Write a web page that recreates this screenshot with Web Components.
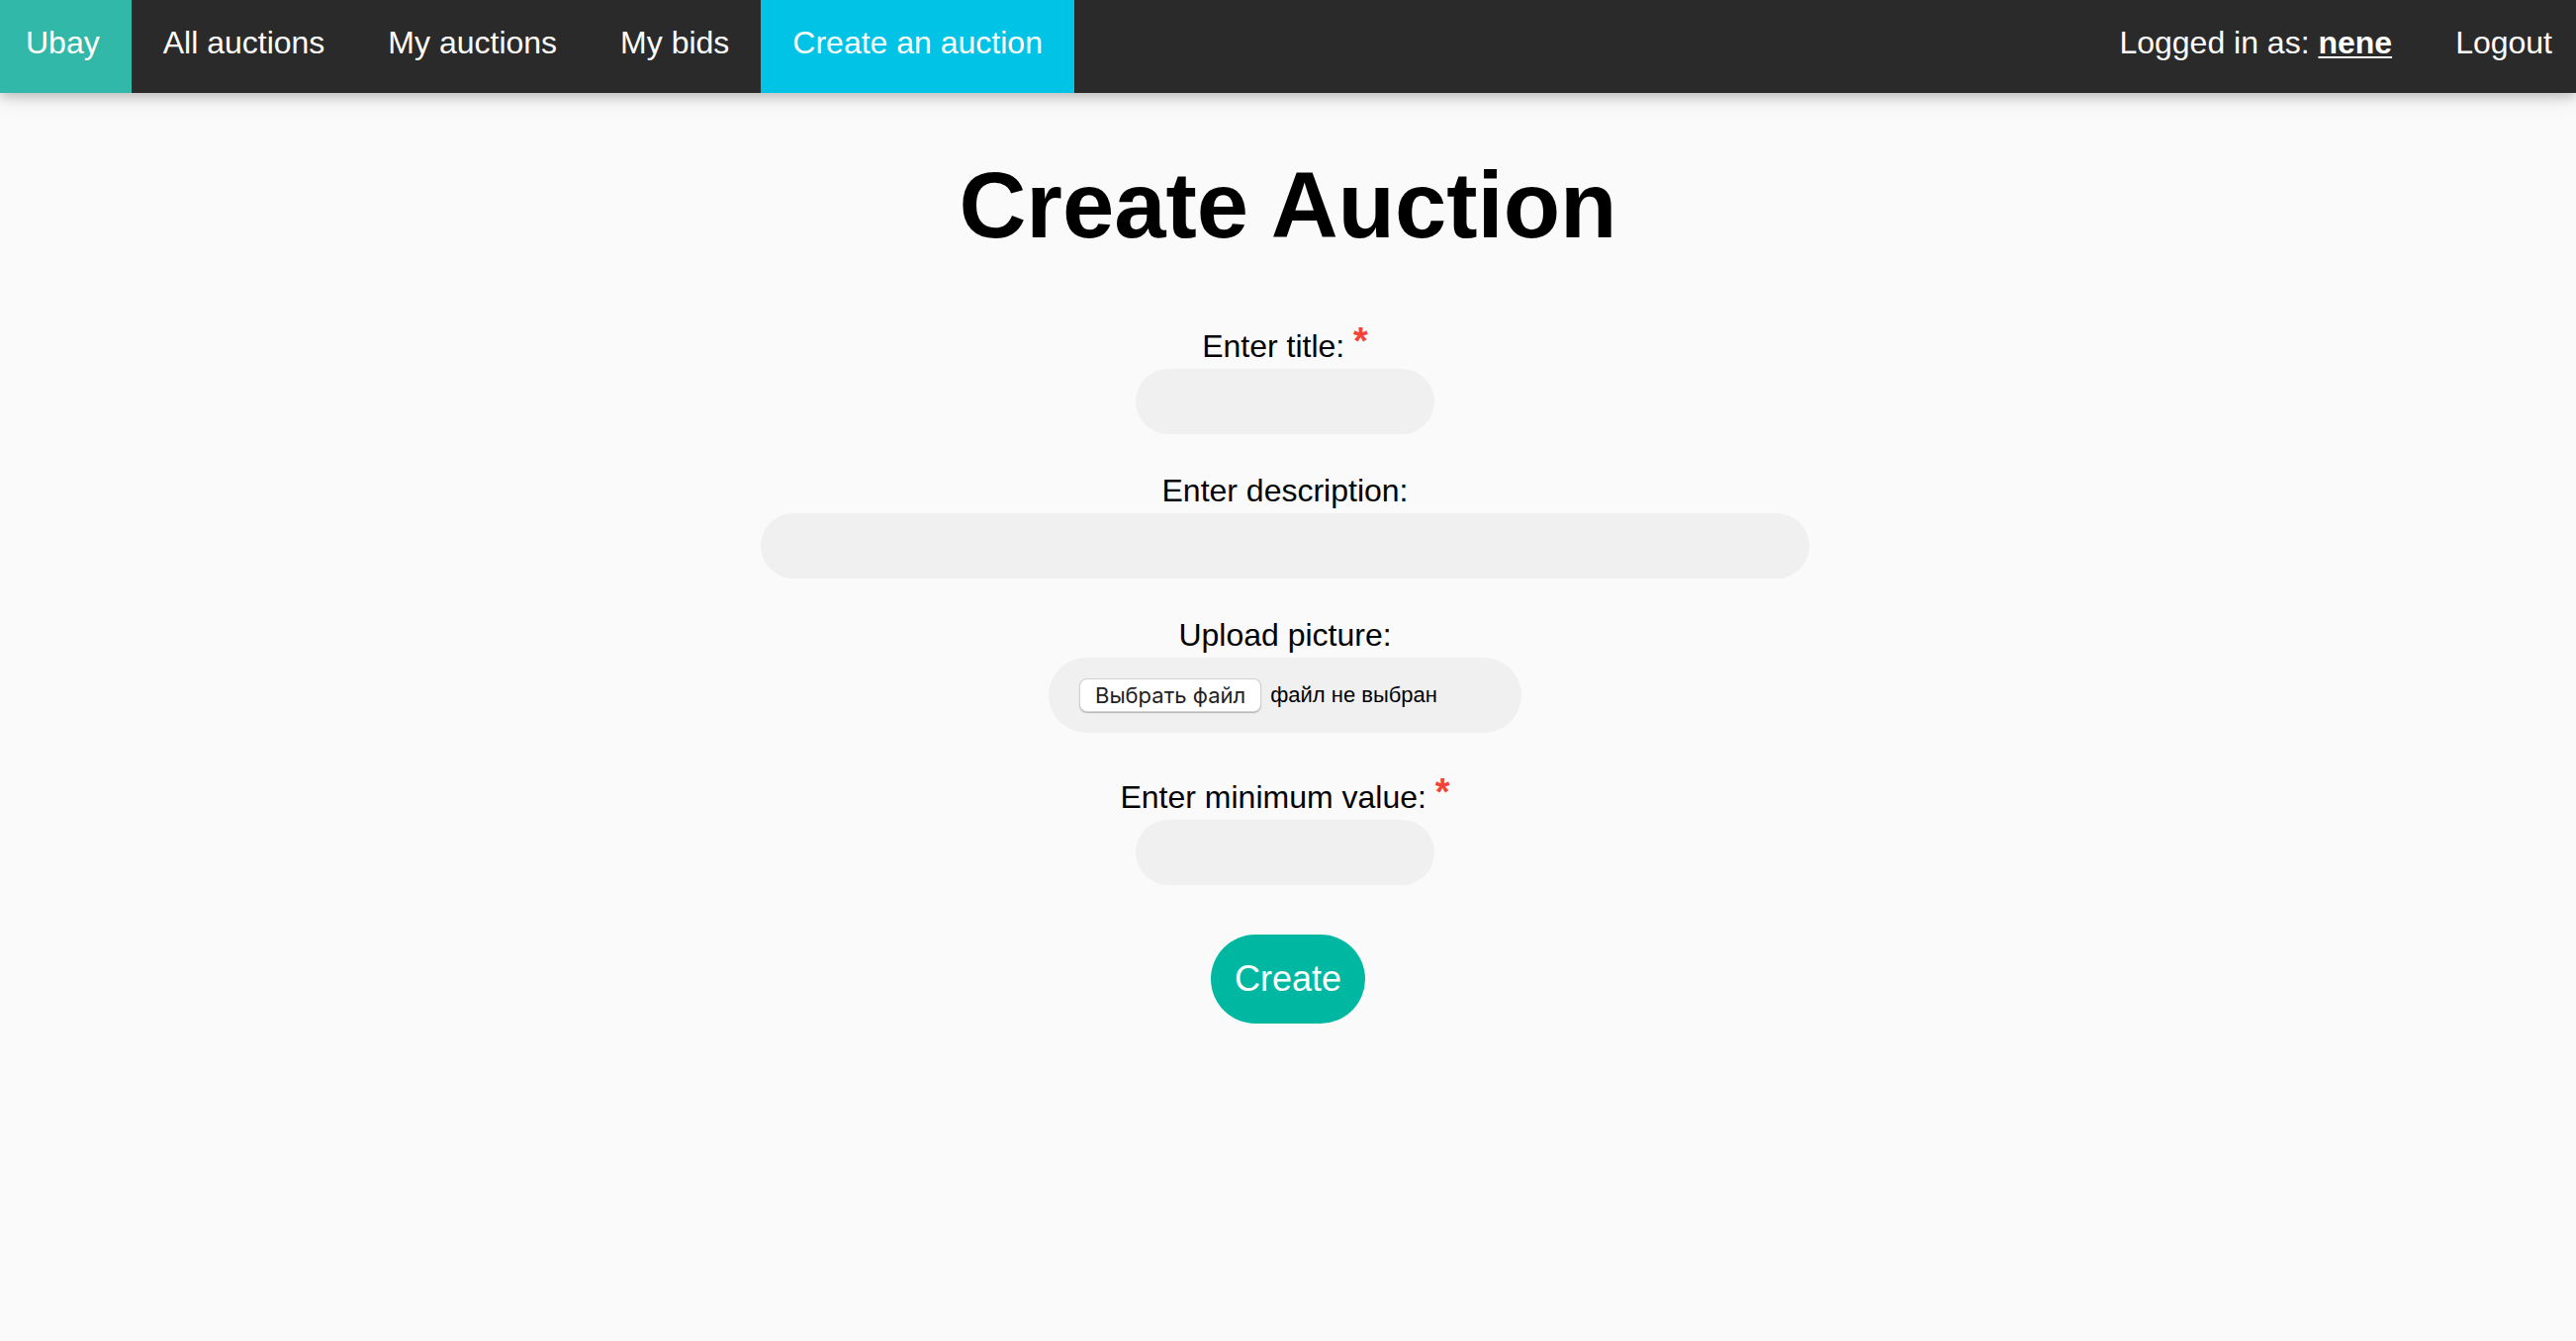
<!DOCTYPE html>
<html lang="en">
<head>
<meta charset="utf-8">
<title>Create Auction</title>
<style>
  body {
    margin: 0;
    min-height: 100vh;
    background: #fafafa;
    color: #000;
    font: 32px/46px "Liberation Sans", Arial, sans-serif;
  }
</style>
</head>
<body>
<ubay-app></ubay-app>

<template id="nav-bar">
  <style>
    :host {
      display: block;
      background: #2a2a2a;
      box-shadow: 0 4px 10px rgba(0, 0, 0, .16), 0 4px 20px rgba(0, 0, 0, .12);
    }
    nav { display: flex; height: 94px; }
    .spacer { flex: 1; }
  </style>
  <nav><slot></slot><span class="spacer"></span><slot name="end"></slot></nav>
</template>

<template id="nav-link">
  <style>
    :host { display: flex; color: #fff; white-space: nowrap; }
    a { padding: 20px 32px 28px; color: inherit; text-decoration: none; }
    :host([kind="brand"]) a { padding-left: 26px; background: #32b8a8; }
    :host([kind="active"]) a { background: #00c3e6; }
    :host([kind="last"]) a { padding-right: 24px; }
    ::slotted(b) { text-decoration: underline; text-decoration-thickness: 2px; text-underline-offset: 3px; }
  </style>
  <a href="#"><slot></slot></a>
</template>

<template id="form-field">
  <style>
    :host { display: flex; flex-direction: column; align-items: center; }
    .star { color: #f44336; font-size: 38px; font-weight: bold; line-height: 32px; vertical-align: 3px; }
    input[type="text"] {
      box-sizing: border-box;
      width: 302px;
      max-width: 100%;
      height: 66px;
      padding: 0 32px;
      border: 0;
      border-radius: 33px;
      background: #f0f0f0;
      font: inherit;
      outline: none;
    }
    :host([wide]) input { width: 1060px; }
  </style>
  <label for="control"><span class="text"></span><span class="star"></span></label>
  <input id="control" type="text">
</template>

<template id="file-field">
  <style>
    :host { display: flex; flex-direction: column; align-items: center; }
    .box {
      position: relative;
      display: flex;
      align-items: center;
      gap: 10px;
      box-sizing: border-box;
      width: 478px;
      height: 76px;
      padding: 0 32px;
      border-radius: 38px;
      background: #f0f0f0;
      font-size: 22px;
      line-height: 32px;
      white-space: nowrap;
    }
    .choose {
      padding: 0 15px;
      border-radius: 7px;
      background: #fff;
      color: #222;
      font-family: Inter, sans-serif;
      box-shadow: 0 0 0 1px #d2d2d2, 0 1px 1px 1px #b4b4b4;
    }
    input { position: absolute; inset: 0; width: 100%; opacity: 0; }
  </style>
  <label for="control"><slot></slot></label>
  <div class="box">
    <span class="choose">Выбрать файл</span>
    <span>файл не выбран</span>
    <input id="control" type="file">
  </div>
</template>

<template id="pill-button">
  <style>
    :host { display: inline-flex; }
    button {
      height: 90px;
      padding: 0 24px;
      border: 0;
      border-radius: 45px;
      background: #00b8a2;
      color: #fff;
      font: inherit;
      font-size: 36px;
    }
  </style>
  <button type="submit"><slot></slot></button>
</template>

<template id="ubay-app">
  <style>
    :host { display: block; }
    main { display: flex; flex-direction: column; align-items: center; padding: 60px 24px 0; }
    h1 { margin: 0 0 65px; font-size: 94px; line-height: 108px; }
    form { display: flex; flex-direction: column; align-items: center; width: 100%; }
    .fields { display: flex; flex-direction: column; gap: 34px; width: 100%; box-sizing: border-box; padding-right: 6px; }
    file-field { padding-bottom: 8px; }
    pill-button { margin-top: 50px; }
  </style>
  <nav-bar>
    <nav-link kind="brand">Ubay</nav-link>
    <nav-link>All auctions</nav-link>
    <nav-link>My auctions</nav-link>
    <nav-link>My bids</nav-link>
    <nav-link kind="active">Create an auction</nav-link>
    <nav-link slot="end">Logged in as: <b>nene</b></nav-link>
    <nav-link slot="end" kind="last">Logout</nav-link>
  </nav-bar>
  <main>
    <h1>Create Auction</h1>
    <form>
      <div class="fields">
        <form-field label="Enter title:" required></form-field>
        <form-field label="Enter description:" wide></form-field>
        <file-field>Upload picture:</file-field>
        <form-field label="Enter minimum value:" required></form-field>
      </div>
      <pill-button>Create</pill-button>
    </form>
  </main>
</template>

<script>
  class TemplateElement extends HTMLElement {
    constructor() {
      super();
      const template = document.getElementById(this.localName);
      this.attachShadow({ mode: "open" }).append(template.content.cloneNode(true));
    }
  }

  class FormField extends TemplateElement {
    connectedCallback() {
      const required = this.hasAttribute("required");
      const star = this.shadowRoot.querySelector(".star");
      this.shadowRoot.querySelector(".text").textContent = this.getAttribute("label") + (required ? " " : "");
      if (required) star.textContent = "*";
      else star.remove();
      this.shadowRoot.querySelector("input").required = required;
    }
  }

  customElements.define("nav-link", class extends TemplateElement {});
  customElements.define("nav-bar", class extends TemplateElement {});
  customElements.define("form-field", FormField);
  customElements.define("file-field", class extends TemplateElement {});
  customElements.define("pill-button", class extends TemplateElement {});
  customElements.define("ubay-app", class extends TemplateElement {});
</script>
</body>
</html>
